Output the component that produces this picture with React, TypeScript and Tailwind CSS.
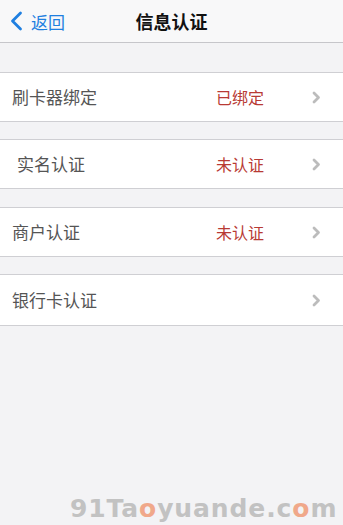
const font = { fontFamily: '"Noto Sans CJK SC", "Liberation Sans", sans-serif' };

function Chevron() {
  return (
    <svg width="9" height="13" viewBox="0 0 9 13" className="shrink-0">
      <path d="M2 2 L6.5 6.5 L2 11" fill="none" stroke="#bcbcbc" strokeWidth="2.8" strokeLinecap="round" strokeLinejoin="round" />
    </svg>
  );
}

interface RowProps {
  label: string;
  status?: string;
  indent?: boolean;
  tall?: boolean;
}

function Row({ label, status, indent, tall }: RowProps) {
  return (
    <div className={`${tall ? "h-[52px]" : "h-[50px]"} bg-white border-y border-[#cfcfd3] flex items-center`}>
      <span className={`${indent ? "pl-[17px]" : "pl-[12px]"} text-[17px] text-[#555] flex-1`}>{label}</span>
      <span className="text-[16px] text-[#b83a34] w-[96px]">{status}</span>
      <span className="pr-[22px] pt-[1px]"><Chevron /></span>
    </div>
  );
}

export default function App() {
  return (
    <div className="w-[343px] h-[525px] bg-[#f3f3f5] flex flex-col overflow-hidden" style={font}>
      <div className="h-[43px] bg-[#f8f8f9] border-b border-[#c6c6ca] flex items-center relative">
        <div className="flex items-center pl-[10px] text-[#1f7fe0]">
          <svg width="13" height="20" viewBox="0 0 13 20">
            <path d="M10.5 2 L2.5 10 L10.5 18" fill="none" stroke="#1f7fe0" strokeWidth="2.8" strokeLinecap="round" strokeLinejoin="round" />
          </svg>
          <span className="ml-[8px] text-[17px] leading-none">返回</span>
        </div>
        <span className="absolute left-0 right-0 text-center text-[18px] font-bold text-[#111] pointer-events-none">信息认证</span>
      </div>
      <div className="mt-[29px] flex flex-col">
        <Row label="刷卡器绑定" status="已绑定" />
        <div className="h-[17px]" />
        <Row label="实名认证" status="未认证" indent />
        <div className="h-[18px]" />
        <Row label="商户认证" status="未认证" />
        <div className="h-[17px]" />
        <Row label="银行卡认证" tall />
      </div>
      <div className="flex-1" />
      <div
        className="pl-[70px] pb-[1px] text-[25px] leading-[30px] font-bold text-[#c2c2c2] tracking-[0.9px]"
        style={{ fontFamily: '"DejaVu Sans", Verdana, sans-serif' }}
      >
        91Ta<span className="text-[#f0a88a]">o</span>yuande.c<span className="text-[#f0a88a]">o</span>m
      </div>
    </div>
  );
}
